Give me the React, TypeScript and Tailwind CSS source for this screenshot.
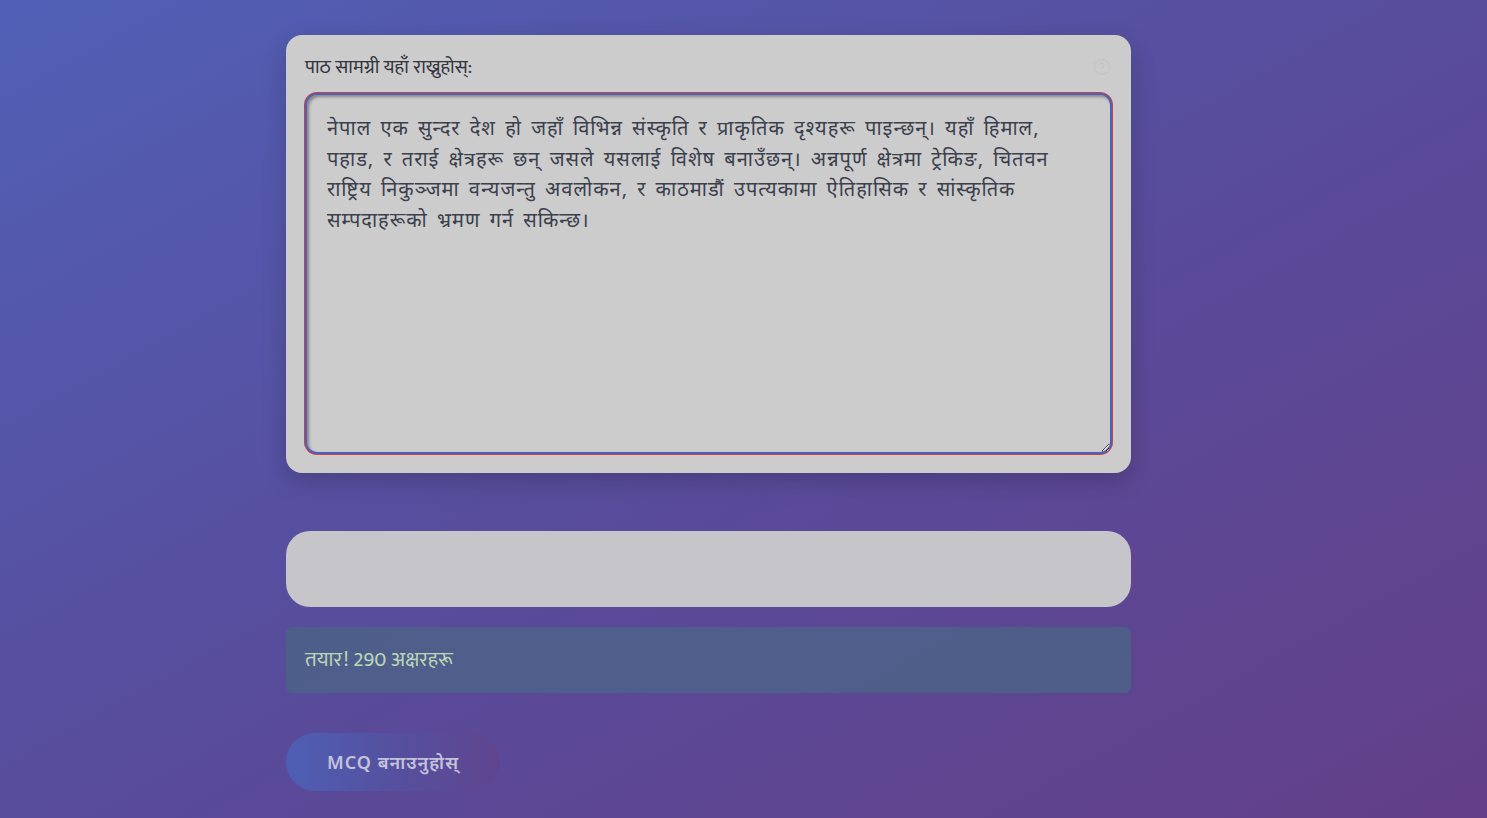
import React from 'react';

const sampleText =
  'नेपाल एक सुन्दर देश हो जहाँ विभिन्न संस्कृति र प्राकृतिक दृश्यहरू पाइन्छन्। यहाँ हिमाल, पहाड, र तराई क्षेत्रहरू छन् जसले यसलाई विशेष बनाउँछन्। अन्नपूर्ण क्षेत्रमा ट्रेकिङ, चितवन राष्ट्रिय निकुञ्जमा वन्यजन्तु अवलोकन, र काठमाडौं उपत्यकामा ऐतिहासिक र सांस्कृतिक सम्पदाहरूको भ्रमण गर्न सकिन्छ।';

export default function App() {
  return (
    <div className="min-h-screen w-full bg-gradient-to-br from-[#5060b6] via-[#584c9c] to-[#633f88] pt-[35px] pb-[26px] font-['Noto_Sans','Liberation_Sans',sans-serif]">
      <div className="ml-[286px] w-[845px] flex flex-col">
        {/* Input card */}
        <div className="bg-[#cccccc] rounded-[16px] px-[19px] pt-[20px] pb-[19px] shadow-[0_8px_24px_rgba(0,0,0,0.18)]">
          <div className="flex items-center justify-between mb-[14px]">
            <label className="font-['Mukta','Noto_Sans',sans-serif] text-[19.5px] leading-[24px] text-[#333640]">
              पाठ सामग्री यहाँ राख्नुहोस्:
            </label>
            <svg width="18" height="18" viewBox="0 0 24 24" className="mr-[1px] opacity-[0.06]" fill="none" stroke="#555" strokeWidth="2">
              <circle cx="12" cy="12" r="10" />
              <path d="M9.1 9a3 3 0 0 1 5.8 1c0 2-3 3-3 3" />
              <path d="M12 17h.01" />
            </svg>
          </div>
          <textarea
            defaultValue={sampleText}
            className="block w-full h-[361px] resize-y rounded-[12px] border-2 border-[#4f60b8] bg-[#cccccc] px-[20px] py-[18px] text-[20px] leading-[30.5px] tracking-[1px] [word-spacing:3px] text-[#3b404c] outline-none shadow-[0_0_0_1px_#c8404a,inset_2px_2px_3px_rgba(0,0,0,0.35)]"
          />
        </div>

        {/* Empty output panel */}
        <div className="mt-[58px] h-[76px] rounded-[24px] bg-[#c6c5ca]" />

        {/* Status */}
        <div className="mt-[20px] h-[66px] rounded-[6px] bg-[#4e6088]/90 flex items-center px-[19px]">
          <span className="font-['Mukta','Noto_Sans',sans-serif] text-[21px] text-[#b9d6b6]">तयार! 290 अक्षरहरू</span>
        </div>

        {/* Action */}
        <div className="mt-[40px]">
          <button className="h-[58px] w-[214px] rounded-full bg-gradient-to-r from-[#4e5fb4] via-[#55509f] to-[#5f4590] text-[18px] font-semibold tracking-[1px] text-[#c3c3dc]">
            MCQ बनाउनुहोस्
          </button>
        </div>
      </div>
    </div>
  );
}
